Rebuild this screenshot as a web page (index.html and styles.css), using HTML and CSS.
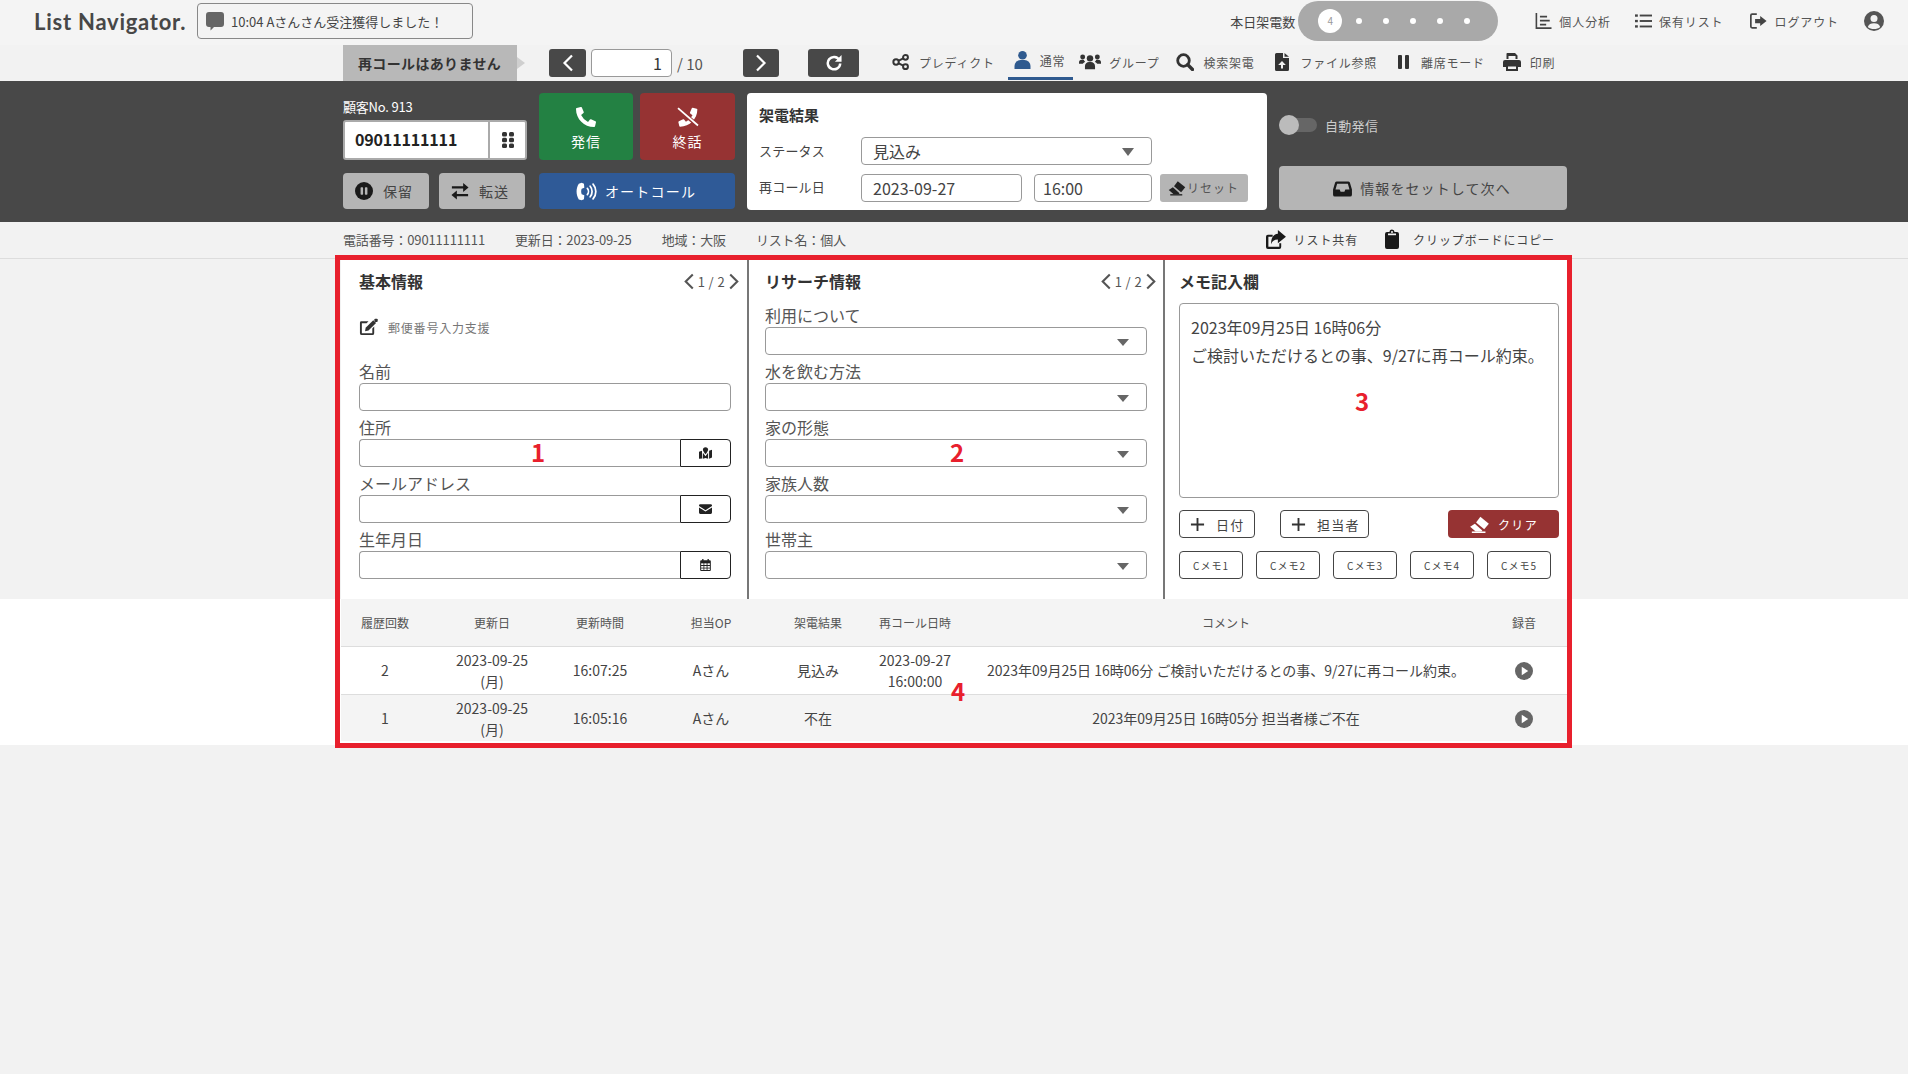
FILE: index.html
```html
<!DOCTYPE html>
<html lang="ja">
<head>
<meta charset="utf-8">
<title>List Navigator</title>
<link rel="stylesheet" href="styles.css">
</head>
<body>
<svg class="defs" aria-hidden="true">
<symbol id="i-phone" viewBox="0 0 512 512"><path d="M497.39 361.8l-112-48a24 24 0 0 0-28 6.9l-49.6 60.6A370.66 370.66 0 0 1 130.6 204.11l60.6-49.6a23.94 23.94 0 0 0 6.9-28l-48-112A24.16 24.16 0 0 0 122.6.61l-104 24A24 24 0 0 0 0 48c0 256.5 207.9 464 464 464a24 24 0 0 0 23.4-18.6l24-104a24.29 24.29 0 0 0-14.01-27.6z" fill="currentColor"/></symbol>
<symbol id="i-hang" viewBox="-30 -20 580 540"><g transform="translate(512 0) scale(-1 1)"><path d="M497.39 361.8l-112-48a24 24 0 0 0-28 6.9l-49.6 60.6A370.66 370.66 0 0 1 130.6 204.11l60.6-49.6a23.94 23.94 0 0 0 6.9-28l-48-112A24.16 24.16 0 0 0 122.6.61l-104 24A24 24 0 0 0 0 48c0 256.5 207.9 464 464 464a24 24 0 0 0 23.4-18.6l24-104a24.29 24.29 0 0 0-14.01-27.6z" fill="currentColor"/></g><path d="M0 30L520 480" stroke="#963333" stroke-width="110" fill="none"/><path d="M-10 10L530 480" stroke="currentColor" stroke-width="48" fill="none"/></symbol>
<symbol id="i-grid" viewBox="0 0 12 16"><g fill="currentColor"><rect x="0" y="0" width="5" height="4.500" rx="1.500"/><rect x="7" y="0" width="5" height="4.500" rx="1.500"/><rect x="0" y="5.800" width="5" height="4.500" rx="1.500"/><rect x="7" y="5.800" width="5" height="4.500" rx="1.500"/><rect x="0" y="11.500" width="5" height="4.500" rx="1.500"/><rect x="7" y="11.500" width="5" height="4.500" rx="1.500"/></g></symbol>
<symbol id="i-pausec" viewBox="0 0 20 20"><circle cx="10" cy="10" r="10" fill="currentColor"/><rect x="6.200" y="5.800" width="2.800" height="8.400" rx=".8" fill="#b5b5b5"/><rect x="11" y="5.800" width="2.800" height="8.400" rx=".8" fill="#b5b5b5"/></symbol>
<symbol id="i-swap" viewBox="0 0 20 20"><path d="M1 4.800h12.500V1L19.500 6l-6 5V7.200H1zM19 13.200H6.500V9.500l-6 5 6 5v-3.800H19z" fill="currentColor"/></symbol>
<symbol id="i-auto" viewBox="0 0 24 24"><path d="M6.500 2L3.200 3C-.2 8.500-.2 15.500 3.200 21l3.300 1 2.600-1.100.4-4.600-3-1.200c-.8-2-.8-4.200 0-6.200l3-1.200-.4-4.600z" fill="currentColor"/><path d="M13 8.500c1.600 1.900 1.600 5.100 0 7M16.200 6c2.900 3.400 2.900 8.600 0 12M19.500 3.500c4.200 4.800 4.200 12.200 0 17" fill="none" stroke="currentColor" stroke-width="2" stroke-linecap="round"/></symbol>
<symbol id="i-inbox" viewBox="0 0 20 18"><path d="M4 1.500h12a2 2 0 0 1 1.800 1.200L20 10v5.500a2 2 0 0 1-2 2H2a2 2 0 0 1-2-2V10l2.200-7.300A2 2 0 0 1 4 1.500zm.3 2.500L2.600 10H7l1 2.500h4l1-2.500h4.400l-1.700-6z" fill="currentColor" fill-rule="evenodd"/></symbol>
<symbol id="i-eraser2" viewBox="0 0 24 20"><path d="M13 1l10 8-5.500 6.500L8 7.500z" fill="currentColor"/><path d="M6.500 9l8.800 8-1 1.200H7.500L1 12.500z" fill="currentColor"/><rect x="3" y="18.200" width="16" height="1.800" fill="currentColor"/></symbol>
<symbol id="i-share" viewBox="0 0 22 20"><path d="M3 5h5v2H3.500v10.500H15V14h2v4a2 2 0 0 1-2 2H3a2 2 0 0 1-2-2V7a2 2 0 0 1 2-2z" fill="currentColor"/><path d="M13.500 0L22 7l-8.500 7V10C9.500 10 7.500 11.500 6.500 15 6 9 8.500 4.500 13.500 4z" fill="currentColor"/></symbol>
<symbol id="i-clip" viewBox="0 0 14 20"><path d="M4.500 3a2.500 2.500 0 0 1 5 0H12a2 2 0 0 1 2 2v13a2 2 0 0 1-2 2H2a2 2 0 0 1-2-2V5a2 2 0 0 1 2-2zM7 2a1 1 0 1 0 0 2 1 1 0 0 0 0-2z" fill="currentColor" fill-rule="evenodd"/><rect x="3" y="4.500" width="8" height="1.700" fill="#f2f2f2"/></symbol>
<symbol id="i-edit" viewBox="0 0 20 18"><path d="M2.500 3H10L8 5H3v10.500h11V10.500l2-2V15.500a2 2 0 0 1-2 2H3a2 2 0 0 1-2-2V4.500A1.500 1.500 0 0 1 2.500 3z" fill="currentColor"/><path d="M7 9.800L15 1.800l3 3-8 8-3.600.7z" fill="currentColor"/><rect x="16.200" y=".2" width="3.500" height="3.500" rx="1" fill="currentColor"/></symbol>
<symbol id="i-map" viewBox="0 0 20 18"><path d="M10 0a4 4 0 0 1 4 4c0 1.800-2.400 5-4 7-1.600-2-4-5.200-4-7a4 4 0 0 1 4-4z" fill="currentColor"/><path d="M0 7l4.500-1.500.5 12L0 18zM6 8.500l4 5.500 4-5.500V18l-4-1.500L6 18zM15.500 5.500L20 4v12l-4.500 2z" fill="currentColor"/></symbol>
<symbol id="i-mail" viewBox="0 0 20 15"><path d="M2 0h16a2 2 0 0 1 2 2v.8l-10 6.500L0 2.800V2a2 2 0 0 1 2-2zM0 5l10 6.500L20 5v8a2 2 0 0 1-2 2H2a2 2 0 0 1-2-2z" fill="currentColor"/></symbol>
<symbol id="i-cal" viewBox="0 0 16 18"><path d="M3 0h2v2h6V0h2v2h1.500A1.500 1.500 0 0 1 16 3.500V16.500a1.500 1.500 0 0 1-1.500 1.500h-13A1.500 1.500 0 0 1 0 16.500V3.500A1.500 1.500 0 0 1 1.500 2H3z" fill="currentColor"/><g fill="#fff"><rect x="1.500" y="6.500" width="3.500" height="2.500"/><rect x="6.200" y="6.500" width="3.500" height="2.500"/><rect x="11" y="6.500" width="3.500" height="2.500"/><rect x="1.500" y="10.500" width="3.500" height="2.500"/><rect x="6.200" y="10.500" width="3.500" height="2.500"/><rect x="11" y="10.500" width="3.500" height="2.500"/><rect x="1.500" y="14.200" width="3.500" height="2.300"/><rect x="6.200" y="14.200" width="3.500" height="2.300"/><rect x="11" y="14.200" width="3.500" height="2.300"/></g></symbol>
<symbol id="i-play" viewBox="0 0 20 20"><circle cx="10" cy="10" r="10" fill="currentColor"/><path d="M7.500 5.200l7.200 4.800-7.200 4.800z" fill="#fff"/></symbol>
<symbol id="i-comment" viewBox="0 0 18 20"><path d="M3 1h12a3 3 0 0 1 3 3v9a3 3 0 0 1-3 3H8l-3.500 3.500V16H3a3 3 0 0 1-3-3V4a3 3 0 0 1 3-3z" fill="currentColor"/></symbol>
<symbol id="i-nodes" viewBox="0 0 20 18"><g fill="none" stroke="currentColor" stroke-width="2.200"><circle cx="4.500" cy="9" r="3"/><circle cx="15" cy="3.800" r="2.700"/><circle cx="15" cy="14.200" r="2.700"/><path d="M7.500 7.500l5-2.500M7.500 10.500l5 2.500"/></g></symbol>
<symbol id="i-user" viewBox="0 0 16 18"><circle cx="8" cy="4.300" r="4.300" fill="currentColor"/><path d="M0 18v-3a6 6 0 0 1 6-6h4a6 6 0 0 1 6 6v3z" fill="currentColor"/></symbol>
<symbol id="i-users" viewBox="0 0 24 18"><g fill="currentColor"><circle cx="12" cy="5" r="3.500"/><circle cx="4" cy="3.500" r="2.700"/><circle cx="20" cy="3.500" r="2.700"/><path d="M6.500 17v-3.500A4.500 4.500 0 0 1 11 9h2a4.500 4.500 0 0 1 4.500 4.500V17z"/><path d="M0 11V9.500a3 3 0 0 1 3-3h2.200c.3 1 .9 1.700 1.600 2.200-1.200.6-2.100 1.300-2.700 2.300z"/><path d="M24 11V9.500a3 3 0 0 0-3-3h-2.200c-.3 1-.9 1.700-1.600 2.200 1.200.6 2.100 1.300 2.700 2.300z"/></g></symbol>
<symbol id="i-search" viewBox="0 0 18 18"><circle cx="7.500" cy="7.500" r="5.800" fill="none" stroke="currentColor" stroke-width="2.800"/><path d="M11.800 11.800L16.500 16.500" stroke="currentColor" stroke-width="3.400" stroke-linecap="round"/></symbol>
<symbol id="i-file" viewBox="0 0 14 18"><path d="M1.500 0H8v5h6v11.500a1.500 1.500 0 0 1-1.500 1.500h-11A1.500 1.500 0 0 1 0 16.500v-15A1.500 1.500 0 0 1 1.500 0zM7 8l-3.800 4H6v3.500h2V12h2.800z" fill="currentColor" fill-rule="evenodd"/><path d="M9.500 0L14 3.800H9.500z" fill="currentColor"/></symbol>
<symbol id="i-pause" viewBox="0 0 11 14"><rect x="0" y="0" width="4" height="14" rx="1" fill="currentColor"/><rect x="7" y="0" width="4" height="14" rx="1" fill="currentColor"/></symbol>
<symbol id="i-print" viewBox="0 0 18 18"><path d="M4 0h8l2.500 2.500V6h-2V3H5.500v3H3.500V1a1 1 0 0 1 .5-1z" fill="currentColor"/><path d="M2 7h14a2 2 0 0 1 2 2v5h-3v4H3v-4H0V9a2 2 0 0 1 2-2zm3 6.500V16h8v-2.500z" fill="currentColor" fill-rule="evenodd"/></symbol>
<symbol id="i-chart" viewBox="0 0 18 18"><path d="M1 0v17h17" fill="none" stroke="currentColor" stroke-width="1.800"/><path d="M5 4h8M5 8.500h11M5 13h7" stroke="currentColor" stroke-width="2"/></symbol>
<symbol id="i-list" viewBox="0 0 18 16"><g fill="currentColor"><rect x="0" y="1" width="3" height="2.500"/><rect x="0" y="6.800" width="3" height="2.500"/><rect x="0" y="12.500" width="3" height="2.500"/><rect x="5" y="1.200" width="13" height="2"/><rect x="5" y="7" width="13" height="2"/><rect x="5" y="12.800" width="13" height="2"/></g></symbol>
<symbol id="i-out" viewBox="0 0 20 18"><path d="M8 1H2.500A1.500 1.500 0 0 0 1 2.500v13A1.500 1.500 0 0 0 2.500 17H8" fill="none" stroke="currentColor" stroke-width="2"/><path d="M12 3l7.500 6-7.500 6v-3.500H6v-5h6z" fill="currentColor"/></symbol>
<symbol id="i-usercircle" viewBox="0 0 20 20"><circle cx="10" cy="10" r="10" fill="currentColor"/><circle cx="10" cy="7.500" r="3.500" fill="#f2f2f2"/><path d="M3.800 16c1-2.800 3-3.800 6.200-3.800s5.200 1 6.200 3.800c-3 2.700-9.400 2.700-12.400 0z" fill="#f2f2f2"/></symbol>
<symbol id="i-left" viewBox="0 0 12 18"><path d="M10 1.500L2.500 9l7.500 7.500" fill="none" stroke="currentColor" stroke-width="2.200"/></symbol>
<symbol id="i-right" viewBox="0 0 12 18"><path d="M2 1.500L9.500 9 2 16.500" fill="none" stroke="currentColor" stroke-width="2.200"/></symbol>
<symbol id="i-reload" viewBox="0 0 18 18"><path d="M15 5.500A7 7 0 1 0 16 9.500" fill="none" stroke="currentColor" stroke-width="2.800"/><path d="M17.500 0v7.500H10z" fill="currentColor"/></symbol>
</svg>

<header class="topbar">
  <div class="logo">List Navigator.</div>
  <div class="notice"><svg class="ic ic-comment"><use href="#i-comment"/></svg><span>10:04 Aさんさん受注獲得しました！</span></div>
  <div class="top-right">
    <span class="calls-label">本日架電数</span>
    <div class="pill"><span class="pill-count">4</span><i class="dot"></i><i class="dot"></i><i class="dot"></i><i class="dot"></i><i class="dot"></i></div>
    <a class="top-link link-a"><svg class="ic ic-16"><use href="#i-chart"/></svg>個人分析</a>
    <a class="top-link link-b"><svg class="ic ic-16"><use href="#i-list"/></svg>保有リスト</a>
    <a class="top-link link-c"><svg class="ic ic-16"><use href="#i-out"/></svg>ログアウト</a>
    <svg class="ic ic-user-circle"><use href="#i-usercircle"/></svg>
  </div>
</header>

<section class="toolbar">
  <div class="wrap toolbar-in">
    <div class="recall">再コールはありません</div>
    <button class="sq sq-prev"><svg class="ic ic-chev"><use href="#i-left"/></svg></button>
    <input class="page-input" value="1">
    <span class="page-total">/ 10</span>
    <button class="sq sq-next"><svg class="ic ic-chev"><use href="#i-right"/></svg></button>
    <button class="sq sq-reload"><svg class="ic ic-reload"><use href="#i-reload"/></svg></button>
    <nav class="nav">
      <a class="nav-item nav-predict"><svg class="ic ic-nav"><use href="#i-nodes"/></svg>プレディクト</a>
      <a class="nav-item nav-normal active"><svg class="ic ic-nav"><use href="#i-user"/></svg>通常</a>
      <a class="nav-item nav-group"><svg class="ic ic-nav ic-wide"><use href="#i-users"/></svg>グループ</a>
      <a class="nav-item nav-search"><svg class="ic ic-nav"><use href="#i-search"/></svg>検索架電</a>
      <a class="nav-item nav-file"><svg class="ic ic-nav"><use href="#i-file"/></svg>ファイル参照</a>
      <a class="nav-item nav-away"><svg class="ic ic-nav ic-pause"><use href="#i-pause"/></svg>離席モード</a>
      <a class="nav-item nav-print"><svg class="ic ic-nav"><use href="#i-print"/></svg>印刷</a>
    </nav>
  </div>
</section>

<section class="dialer">
  <div class="wrap dialer-in">
    <div class="tel-col">
      <div class="cust-no">顧客No. 913</div>
      <div class="tel-box"><span class="tel-num">09011111111</span><span class="tel-pad"><svg class="ic ic-grid"><use href="#i-grid"/></svg></span></div>
      <div class="tel-actions">
        <button class="gray-btn"><svg class="ic ic-18"><use href="#i-pausec"/></svg>保留</button>
        <button class="gray-btn"><svg class="ic ic-swap"><use href="#i-swap"/></svg>転送</button>
      </div>
    </div>
    <div class="call-col">
      <div class="call-row">
        <button class="call-btn call-go"><svg class="ic ic-call"><use href="#i-phone"/></svg>発信</button>
        <button class="call-btn call-end"><svg class="ic ic-call ic-hang"><use href="#i-hang"/></svg>終話</button>
      </div>
      <button class="auto-btn"><svg class="ic ic-auto"><use href="#i-auto"/></svg>オートコール</button>
    </div>
    <div class="result">
      <div class="result-title">架電結果</div>
      <div class="result-row row-status">
        <span class="result-label">ステータス</span>
        <div class="fake-select status-select"><span>見込み</span><i class="tri"></i></div>
      </div>
      <div class="result-row row-date">
        <span class="result-label">再コール日</span>
        <input class="r-input date-input" value="2023-09-27">
        <input class="r-input time-input" value="16:00">
        <button class="reset-btn"><svg class="ic ic-eraser"><use href="#i-eraser2"/></svg>リセット</button>
      </div>
    </div>
    <div class="next-col">
      <div class="auto-toggle"><span class="switch"><i class="knob"></i></span><span>自動発信</span></div>
      <button class="next-btn"><svg class="ic ic-inbox"><use href="#i-inbox"/></svg>情報をセットして次へ</button>
    </div>
  </div>
</section>

<section class="infobar">
  <div class="wrap info-in">
    <span class="info-item">電話番号：09011111111</span>
    <span class="info-item">更新日：2023-09-25</span>
    <span class="info-item">地域：大阪</span>
    <span class="info-item">リスト名：個人</span>
    <a class="info-btn info-share"><svg class="ic ic-share"><use href="#i-share"/></svg>リスト共有</a>
    <a class="info-btn info-copy"><svg class="ic ic-clip"><use href="#i-clip"/></svg>クリップボードにコピー</a>
  </div>
</section>

<main class="wrap panels">
  <section class="panel panel-a">
    <div class="panel-head"><h2>基本情報</h2><div class="pager"><svg class="ic ic-pg"><use href="#i-left"/></svg><span>1 / 2</span><svg class="ic ic-pg"><use href="#i-right"/></svg></div></div>
    <div class="zip-tool"><svg class="ic ic-edit"><use href="#i-edit"/></svg>郵便番号入力支援</div>
    <div class="field"><label>名前</label><input class="f-input"></div>
    <div class="field"><label>住所</label><div class="group"><input class="f-input"><button class="addon"><svg class="ic ic-addon"><use href="#i-map"/></svg></button></div></div>
    <div class="field"><label>メールアドレス</label><div class="group"><input class="f-input"><button class="addon"><svg class="ic ic-addon"><use href="#i-mail"/></svg></button></div></div>
    <div class="field"><label>生年月日</label><div class="group"><input class="f-input"><button class="addon"><svg class="ic ic-addon"><use href="#i-cal"/></svg></button></div></div>
  </section>
  <section class="panel panel-b">
    <div class="panel-head"><h2>リサーチ情報</h2><div class="pager"><svg class="ic ic-pg"><use href="#i-left"/></svg><span>1 / 2</span><svg class="ic ic-pg"><use href="#i-right"/></svg></div></div>
    <div class="field"><label>利用について</label><div class="fake-select"><i class="tri"></i></div></div>
    <div class="field"><label>水を飲む方法</label><div class="fake-select"><i class="tri"></i></div></div>
    <div class="field"><label>家の形態</label><div class="fake-select"><i class="tri"></i></div></div>
    <div class="field"><label>家族人数</label><div class="fake-select"><i class="tri"></i></div></div>
    <div class="field"><label>世帯主</label><div class="fake-select"><i class="tri"></i></div></div>
  </section>
  <section class="panel panel-c">
    <div class="panel-head memo-head"><h2>メモ記入欄</h2></div>
    <div class="memo">2023年09月25日 16時06分<br>ご検討いただけるとの事、9/27に再コール約束。</div>
    <div class="memo-btns">
      <button class="line-btn btn-date"><svg class="ic ic-plus" viewBox="0 0 16 16"><path d="M8 1v14M1 8h14" stroke="currentColor" stroke-width="2"/></svg>日付</button>
      <button class="line-btn btn-staff"><svg class="ic ic-plus" viewBox="0 0 16 16"><path d="M8 1v14M1 8h14" stroke="currentColor" stroke-width="2"/></svg>担当者</button>
      <button class="clear-btn"><svg class="ic ic-clear"><use href="#i-eraser2"/></svg>クリア</button>
    </div>
    <div class="c-memos">
      <button class="c-memo">Cメモ1</button><button class="c-memo">Cメモ2</button><button class="c-memo">Cメモ3</button><button class="c-memo">Cメモ4</button><button class="c-memo">Cメモ5</button>
    </div>
  </section>
</main>

<section class="history">
  <div class="wrap">
    <table class="h-table">
      <colgroup><col class="c1"><col class="c2"><col class="c3"><col class="c4"><col class="c5"><col class="c6"><col class="c7"><col class="c8"></colgroup>
      <thead><tr><th>履歴回数</th><th>更新日</th><th>更新時間</th><th>担当OP</th><th>架電結果</th><th>再コール日時</th><th>コメント</th><th>録音</th></tr></thead>
      <tbody>
        <tr class="row-white"><td>2</td><td>2023-09-25<br>(月)</td><td>16:07:25</td><td>Aさん</td><td>見込み</td><td>2023-09-27<br>16:00:00</td><td>2023年09月25日 16時06分 ご検討いただけるとの事、9/27に再コール約束。</td><td><svg class="ic ic-play"><use href="#i-play"/></svg></td></tr>
        <tr class="row-gray"><td>1</td><td>2023-09-25<br>(月)</td><td>16:05:16</td><td>Aさん</td><td>不在</td><td></td><td>2023年09月25日 16時05分 担当者様ご不在</td><td><svg class="ic ic-play"><use href="#i-play"/></svg></td></tr>
      </tbody>
    </table>
  </div>
</section>

<div class="highlight" aria-hidden="true"></div>
<span class="mark mark-1">1</span>
<span class="mark mark-2">2</span>
<span class="mark mark-3">3</span>
<span class="mark mark-4">4</span>
</body>
</html>
```
FILE: styles.css
```css
* { box-sizing: border-box; }
html, body { margin: 0; padding: 0; }
body {
  position: relative;
  min-height: 1074px;
  background: #f2f2f2;
  color: #333;
  font-family: "Noto Sans CJK JP", "Noto Sans", sans-serif;
  font-size: 14px;
  overflow: hidden;
}
button, input { font-family: inherit; color: inherit; outline: none; }
button { padding: 0; border: 0; cursor: pointer; }
a { color: inherit; }
.defs { position: absolute; width: 0; height: 0; }
.ic { display: block; flex: none; fill: currentColor; }
.wrap { width: 1226px; margin: 0 auto; }

/* top bar */
.topbar { height: 45px; display: flex; align-items: center; padding: 0 0 3px 34px; background: #f4f4f4; }
.logo { width: 163px; font-family: "Lato", sans-serif; font-weight: 700; font-size: 22px; letter-spacing: .75px; color: #474747; white-space: nowrap; }
.notice { width: 276px; height: 36px; display: flex; align-items: center; gap: 7px; padding-left: 8px; border: 1px solid #888; border-radius: 4px; font-size: 13px; color: #444; }
.ic-comment { width: 18px; height: 20px; color: #666; }
.top-right { margin-left: auto; display: flex; align-items: center; padding-right: 24px; }
.calls-label { font-size: 13px; color: #444; margin-right: 3px; }
.pill { width: 200px; height: 40px; margin-right: 37px; padding-left: 20px; display: flex; align-items: center; border-radius: 20px; background: #a9a9a9; }
.pill-count { width: 24px; height: 24px; margin-right: 14px; border-radius: 50%; background: #fff; color: #999; font-size: 10px; line-height: 24px; text-align: center; }
.dot { width: 6px; height: 6px; margin-right: 21px; border-radius: 50%; background: #fff; }
.top-link { display: flex; align-items: center; gap: 7px; font-size: 12px; letter-spacing: .9px; color: #555; white-space: nowrap; }
.link-a { margin-right: 24px; }
.link-b { margin-right: 27px; }
.link-c { margin-right: 25px; }
.ic-16 { width: 17px; height: 16px; }
.ic-user-circle { width: 20px; height: 20px; color: #555; }
.top-link .ic { color: #444; }

/* toolbar */
.toolbar { height: 36px; background: #f2f2f2; }
.toolbar-in { height: 36px; display: flex; align-items: center; padding-left: 2px; }
.recall { position: relative; width: 174px; height: 36px; padding-left: 15px; background: #b8b8b8; font-size: 14px; font-weight: 700; line-height: 36px; letter-spacing: .35px; color: #333; }
.recall::after { content: ""; position: absolute; left: 100%; top: 12px; border-left: 8px solid #cfcfcf; border-top: 6px solid transparent; border-bottom: 6px solid transparent; }
.sq { display: flex; align-items: center; justify-content: center; height: 28px; border-radius: 3px; background: #484848; color: #fff; }
.sq-prev { width: 37px; margin-left: 32px; }
.sq-next { width: 36px; margin-left: 0; }
.sq-reload { width: 51px; margin-left: 29px; }
.ic-chev { width: 12px; height: 18px; }
.ic-reload { width: 16px; height: 16px; }
.page-input { width: 81px; height: 28px; margin-left: 5px; padding: 0 9px 0 0; border: 1px solid #999; border-radius: 4px; background: #fff; text-align: right; font-size: 16px; }
.page-total { width: 71px; padding-left: 5px; font-size: 15px; color: #555; }
.nav { display: flex; height: 36px; margin-left: 28px; }
.nav-item { display: flex; align-items: center; height: 34px; padding: 0 5px; gap: 9px; font-size: 12px; letter-spacing: .75px; color: #555; white-space: nowrap; }
.nav-normal { margin-left: 8px; padding: 0 8px 2px 6px; gap: 9px; }
.nav-group { margin-left: 1px; gap: 8px; }
.nav-search { margin-left: 7px; }
.nav-file { margin-left: 11px; gap: 11px; }
.nav-away { margin-left: 11px; gap: 12px; }
.nav-print { margin-left: 8px; gap: 9px; }
.active { border-bottom: 3px solid #2f5a8f; height: 35px; }
.ic-nav { width: 18px; height: 18px; color: #333; }
.ic-wide { width: 22px; }
.ic-pause { width: 11px; height: 14px; }
.nav-normal .ic-nav { color: #2f5a8f; width: 17px; }
.nav-file .ic-nav { width: 14px; }

/* dialer */
.dialer { height: 141px; background: #484848; }
.dialer-in { display: flex; padding: 12px 0 0 2px; }
.tel-col { width: 196px; }
.cust-no { height: 27px; font-size: 13px; line-height: 28px; letter-spacing: -.2px; color: #fff; }
.tel-box { display: flex; width: 184px; height: 40px; border: 2px solid #aaa; border-radius: 3px; background: #fff; }
.tel-num { width: 143px; padding-left: 10px; font-size: 16px; font-weight: 700; line-height: 35px; letter-spacing: -.15px; color: #222; }
.tel-pad { flex: 1; display: flex; align-items: center; justify-content: center; border-left: 2px solid #aaa; color: #333; }
.ic-grid { width: 12px; height: 16px; }
.tel-actions { display: flex; gap: 10px; margin-top: 13px; }
.gray-btn { display: flex; align-items: center; gap: 10px; width: 86px; height: 36px; padding-left: 12px; border-radius: 4px; background: #b5b5b5; font-size: 14px; letter-spacing: 1px; color: #444; }
.ic-18 { width: 18px; height: 18px; color: #1a1a1a; }
.ic-swap { width: 18px; height: 18px; color: #1a1a1a; }
.call-col { width: 208px; }
.call-row { display: flex; gap: 7px; }
.call-btn { display: flex; flex-direction: column; align-items: center; width: 95px; height: 67px; padding-top: 14px; border-radius: 4px; color: #fff; font-size: 14px; line-height: 22px; letter-spacing: 1px; }
.call-go { background: #238143; width: 94px; }
.call-end { background: #963333; }
.ic-call { width: 20px; height: 20px; margin-bottom: 3px; }
.ic-hang { width: 24px; }
.auto-btn { display: flex; align-items: center; justify-content: center; gap: 8px; width: 196px; height: 36px; margin-top: 13px; padding-right: 2px; border-radius: 4px; background: #2f5a97; color: #fff; font-size: 14px; letter-spacing: 1.2px; }
.ic-auto { width: 21px; height: 21px; }
.result { width: 520px; height: 117px; padding: 9px 0 0 12px; border-radius: 4px; background: #fff; }
.result-title { height: 26px; font-size: 15px; font-weight: 700; line-height: 26px; color: #333; }
.result-row { display: flex; align-items: center; }
.row-status { height: 28px; margin-top: 9px; }
.row-date { height: 29px; margin-top: 8px; }
.result-label { width: 102px; margin-bottom: 2px; font-size: 13px; letter-spacing: .2px; color: #444; }
.row-date .result-label { margin-bottom: 3px; }
.status-select { width: 291px !important; padding-left: 11px; font-size: 16px; line-height: 26px; color: #444; }
.r-input { height: 28px; padding: 0 0 0 11px; border: 1px solid #999; border-radius: 4px; background: #fff; font-size: 16px; color: #444; }
.date-input { width: 161px; }
.time-input { width: 118px; margin-left: 12px; padding-left: 8px; }
.reset-btn { display: flex; align-items: center; gap: 1px; width: 88px; height: 28px; margin-left: 8px; padding-left: 8px; border-radius: 3px; background: #b5b5b5; font-size: 12px; letter-spacing: 1px; color: #555; }
.ic-eraser { width: 18px; height: 16px; color: #222; }
.next-col { width: 288px; margin-left: 12px; }
.auto-toggle { display: flex; align-items: center; gap: 8px; height: 32px; margin-top: 16px; font-size: 13px; letter-spacing: .3px; color: #ccc; }
.switch { position: relative; width: 38px; height: 14px; border-radius: 7px; background: #666; }
.knob { position: absolute; left: 0; top: -3px; width: 20px; height: 20px; border-radius: 50%; background: #bbb; }
.next-btn { display: flex; align-items: center; justify-content: center; gap: 8px; width: 288px; height: 44px; margin-top: 25px; padding-right: 2px; border-radius: 4px; background: #b5b5b5; font-size: 14px; letter-spacing: 1.1px; color: #444; }
.ic-inbox { width: 19px; height: 17px; color: #1a1a1a; }

/* info bar */
.infobar { height: 37px; border-bottom: 1px solid #ddd; }
.info-in { display: flex; align-items: center; height: 36px; padding: 0 0 2px 2px; font-size: 13px; letter-spacing: -.15px; color: #555; }
.info-item { margin-right: 30px; white-space: nowrap; }
.info-btn { display: flex; align-items: center; height: 32px; font-size: 12px; letter-spacing: .9px; color: #444; white-space: nowrap; }
.info-share { margin-left: auto; gap: 8px; }
.info-copy { margin-left: 27px; margin-right: 12px; gap: 14px; }
.ic-share { width: 21px; height: 19px; color: #1a1a1a; }
.ic-clip { width: 14px; height: 20px; color: #1a1a1a; }

/* panels */
.panels { display: flex; height: 340px; background: #fff; }
.panel { height: 340px; border-right: 2px solid #777; }
.panel-a { width: 408px; padding: 0 16px 0 18px; }
.panel-b { width: 416px; padding: 0 16px; }
.panel-c { flex: 1; padding: 0 8px 0 14px; border-right: 0; }
.panel-head { display: flex; align-items: center; justify-content: space-between; height: 40px; padding-top: 4px; }
.panel-head h2 { margin: 0; font-size: 16px; font-weight: 700; line-height: 24px; color: #333; }
.panel-a .panel-head { margin-right: -9px; }
.panel-b .panel-head { margin-right: -10px; }
.memo-head { height: 44px; padding-bottom: 4px; }
.pager { display: flex; align-items: center; gap: 3px; font-size: 13px; letter-spacing: .4px; color: #555; }
.ic-pg { width: 12px; height: 17px; color: #555; }
.zip-tool { display: flex; align-items: center; gap: 10px; height: 56px; font-size: 12px; letter-spacing: .8px; color: #777; }
.ic-edit { width: 19px; height: 18px; color: #333; }
.field { height: 56px; }
.field label { display: block; height: 28px; padding-top: 5px; font-size: 16px; line-height: 22px; color: #555; }
.f-input { display: block; width: 100%; height: 28px; border: 1px solid #999; border-radius: 4px; background: #fff; }
.group { display: flex; }
.group .f-input { flex: 1; min-width: 0; border-right: 0; border-radius: 4px 0 0 4px; }
.addon { display: flex; align-items: center; justify-content: center; width: 51px; height: 28px; border: 1px solid #222; border-radius: 0 4px 4px 0; background: #fff; color: #222; }
.ic-addon { width: 13px; height: 12px; }
.fake-select { position: relative; width: 100%; height: 28px; border: 1px solid #999; border-radius: 4px; background: #fff; }
.tri { position: absolute; right: 17px; top: 11px; border-top: 7px solid #666; border-left: 6px solid transparent; border-right: 6px solid transparent; }
.status-select .tri { right: 17px; top: 10px; border-top-width: 8px; border-left-width: 6px; border-right-width: 6px; }
.memo { height: 195px; padding: 9px 11px; border: 1px solid #999; border-radius: 4px; font-size: 16px; line-height: 28px; color: #444; }
.memo-btns { display: flex; margin-top: 12px; }
.line-btn { display: flex; align-items: center; height: 28px; padding-left: 10px; gap: 11px; border: 1px solid #444; border-radius: 4px; background: #fff; font-size: 13px; letter-spacing: 1.2px; color: #444; }
.btn-date { width: 76px; }
.btn-staff { width: 89px; margin-left: 25px; }
.ic-plus { width: 15px; height: 15px; color: #333; }
.clear-btn { display: flex; align-items: center; justify-content: center; gap: 8px; width: 111px; height: 28px; margin-left: auto; border-radius: 4px; background: #963333; color: #fff; font-size: 12px; letter-spacing: 1.4px; }
.ic-clear { width: 21px; height: 17px; }
.c-memos { display: flex; margin-top: 13px; gap: 13px; }
.c-memo { width: 64px; height: 28px; border: 1px solid #444; border-radius: 4px; background: #fff; font-size: 10px; letter-spacing: 1px; color: #444; }

/* history */
.history { height: 146px; background: #fff; }
.h-table { width: 1226px; border-collapse: collapse; table-layout: fixed; text-align: center; }
.c1 { width: 88px; } .c2 { width: 126px; } .c3 { width: 90px; } .c4 { width: 132px; }
.c5 { width: 82px; } .c6 { width: 112px; } .c7 { width: 510px; } .c8 { width: 86px; }
.h-table th { height: 47px; border-bottom: 1px solid #ddd; background: #f4f4f4; font-size: 12px; font-weight: 400; color: #555; }
.h-table td { height: 48px; padding: 1px 0 0; font-size: 14px; line-height: 21px; color: #444; }
.row-white td { background: #fff; border-bottom: 1px solid #ddd; }
.row-gray td { background: #f4f4f4; height: 47px; padding-top: 2px; }
.ic-play { width: 18px; height: 18px; margin: 0 auto; color: #666; }

/* annotation overlay */
.highlight { position: absolute; left: 335px; top: 255px; width: 1237px; height: 493px; border: 5px solid #e8202d; pointer-events: none; }
.mark { position: absolute; width: 30px; height: 30px; font-size: 24px; font-weight: 700; line-height: 30px; text-align: center; color: #e8202d; }
.mark-1 { left: 523px; top: 437px; }
.mark-2 { left: 942px; top: 437px; }
.mark-3 { left: 1347px; top: 386px; }
.mark-4 { left: 943px; top: 676px; }
```
